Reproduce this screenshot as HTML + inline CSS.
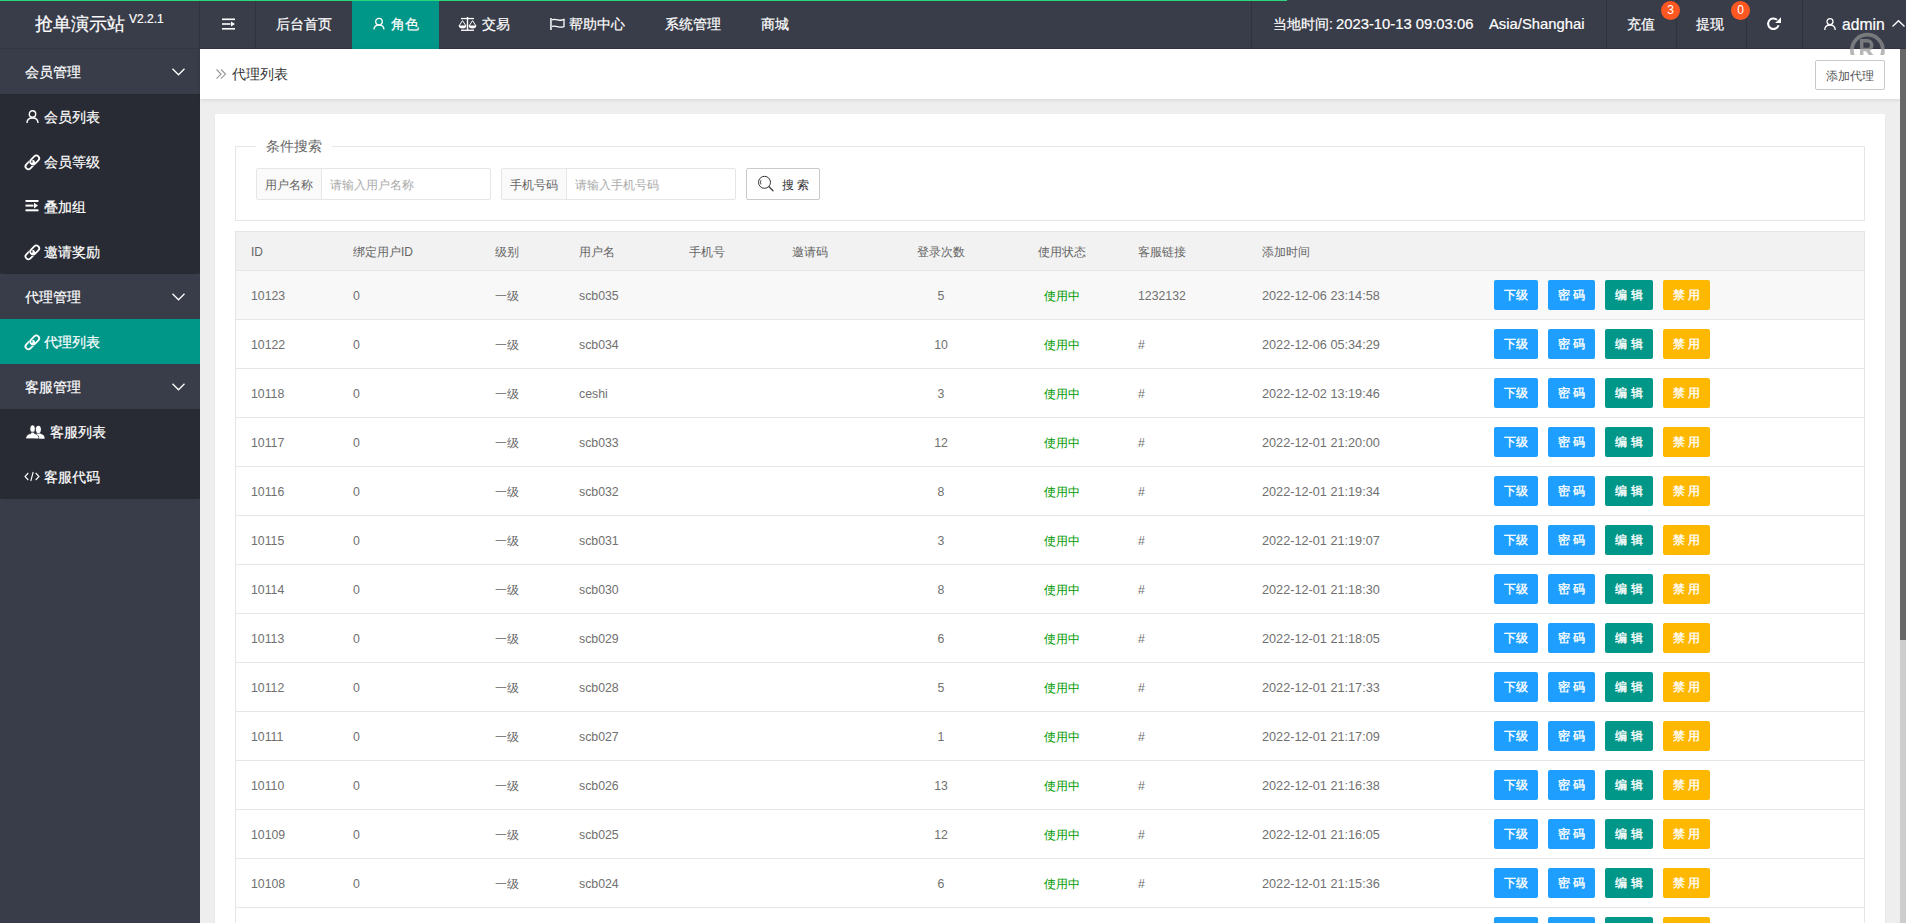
<!DOCTYPE html>
<html><head><meta charset="utf-8">
<style>
*{margin:0;padding:0;box-sizing:border-box}
html,body{width:1906px;height:923px;overflow:hidden;background:#eeeeee;font-family:"Liberation Sans",sans-serif;color:#666}
#hdr{position:absolute;left:0;top:0;width:1906px;height:49px;background:#393d49;border-bottom:1px solid #33363f}
#prog{position:absolute;left:0;top:0;width:1287px;height:1px;background:#2ad77b;z-index:5}
.t{position:absolute;white-space:nowrap;line-height:1}
.h14{font-size:14px;color:#fff}
.sep{position:absolute;top:0;width:1px;height:48px;background:#30333d}
svg{position:absolute;overflow:visible}
#side{position:absolute;left:0;top:49px;width:200px;height:874px;background:#393d49}
.pi{position:absolute;left:0;width:200px;height:45px;background:#393d49;color:#fff;font-size:14px}
.ci{position:absolute;left:0;width:200px;height:45px;color:#fff;font-size:14px}
.grp{position:absolute;left:0;width:200px;background:#282b33;border-radius:0 0 2px 2px}
#crumb{position:absolute;left:200px;top:49px;width:1700px;height:50px;background:#fff;box-shadow:0 1px 4px rgba(0,0,0,.1)}
#card{position:absolute;left:215px;top:114px;width:1670px;height:820px;background:#fff;box-shadow:0 1px 2px 0 rgba(0,0,0,.05)}
#fs{position:absolute;left:235px;top:146px;width:1630px;height:75px;border:1px solid #e6e6e6}
#legend{position:absolute;left:256px;top:138px;width:76px;height:16px;background:#fff}
.ig{position:absolute;top:168px;height:32px;border:1px solid #e6e6e6;border-radius:2px;background:#fff}
.lab{position:absolute;left:0;top:0;height:30px;background:#fafafa;border-right:1px solid #e6e6e6}
#sbtn{position:absolute;left:746px;top:168px;width:74px;height:32px;border:1px solid #c9c9c9;border-radius:2px;background:#fff}
#tbl{position:absolute;left:235px;top:231px;width:1630px;height:700px;border:1px solid #e6e6e6;border-bottom:none}
#th{position:absolute;left:236px;top:232px;width:1628px;height:39px;background:#f2f2f2;border-bottom:1px solid #e6e6e6;font-size:12px;color:#666}
#sb{position:absolute;left:1900px;top:49px;width:6px;height:874px;background:#cdcdcd}
#thumb{position:absolute;left:1900px;top:49px;width:6px;height:591px;background:#676767}
.btn{position:absolute;top:9px;height:30px;line-height:30px;color:#fff;font-size:12px;text-align:center;border-radius:2px}
.b1{background:#1e9fff}.b2{background:#009688}.b3{background:#ffb800}
.row{position:absolute;left:236px;width:1628px;height:49px;border-bottom:1px solid #e6e6e6;font-size:12px;color:#666}
.row .t{top:19px}
.c1{left:15px}.c2{left:117px}.c3{left:259px}.c4{left:343px}.c5{left:453px}.c6{left:556px}
.c7{left:655px;width:100px;text-align:center}.c8{left:776px;width:100px;text-align:center}
.c9{left:902px}.c10{left:1026px}
.lat{font-size:12.3px;color:#707070}.dt{font-size:12.7px;color:#707070}
.green{color:#009900}
#hdr .t,#side .t{-webkit-text-stroke:0.2px currentColor}
.btn{-webkit-text-stroke:0.35px currentColor}

</style></head>
<body>
<div id="hdr">
 <div class="sep" style="left:199px"></div>
 <div class="sep" style="left:255px"></div>
 <div class="sep" style="left:1251px"></div>
 <div class="sep" style="left:1606px"></div>
 <div class="sep" style="left:1676px"></div>
 <div class="sep" style="left:1746px"></div>
 <div class="sep" style="left:1802px"></div>
 <span class="t" style="left:35px;top:15px;font-size:18px;color:#fff">抢单演示站</span>
 <span class="t" style="left:129px;top:13px;font-size:12px;color:#fff">V2.2.1</span>
 <svg style="left:222px;top:18px" width="14" height="13" viewBox="0 0 14 13"><rect x="0" y="0.5" width="13" height="1.6" fill="#fff"/><rect x="0" y="5.2" width="8.5" height="1.6" fill="#fff"/><path d="M9 3.6 L13 6 L9 8.4Z" fill="#fff"/><rect x="0" y="10" width="13" height="1.6" fill="#fff"/></svg>
 <span class="t h14" style="left:276px;top:17px">后台首页</span>
 <div style="position:absolute;left:352px;top:0;width:87px;height:49px;background:#009688"></div>
 <svg style="left:373px;top:17px" width="13" height="13" viewBox="0 0 13 13"><circle cx="6" cy="4.6" r="3.3" fill="none" stroke="#fff" stroke-width="1.3"/><path d="M1 12.6 C1 9.6 3 8.1 6 8.1 C9 8.1 11 9.6 11 12.6" fill="none" stroke="#fff" stroke-width="1.3"/></svg>
 <span class="t h14" style="left:391px;top:17px">角色</span>
 <svg style="left:458px;top:17px" width="19" height="14" viewBox="0 0 19 14"><rect x="3" y="0.9" width="13" height="1.3" fill="#fff"/><rect x="8.8" y="0" width="1.4" height="13" fill="#fff"/><rect x="3" y="12.6" width="13" height="1.3" fill="#fff"/><path d="M4.5 3.6 L1 9 M4.5 3.6 L8 9 M14.5 3.6 L11 9 M14.5 3.6 L18 9" stroke="#fff" stroke-width="1" fill="none"/><path d="M0.7 8.6 H8.3 A3.8 3 0 0 1 0.7 8.6Z M10.7 8.6 H18.3 A3.8 3 0 0 1 10.7 8.6Z" fill="#fff"/></svg>
 <span class="t h14" style="left:482px;top:17px">交易</span>
 <svg style="left:550px;top:17px" width="16" height="14" viewBox="0 0 16 14"><rect x="0.2" y="1" width="1.5" height="12" fill="#fff"/><path d="M2 2.8 C4.5 1.6 6.5 2.6 9 3.2 C11 3.6 12.3 2.6 14 2.3 V9.6 C12.3 10 11 10.6 9 10 C6.5 9.3 4.5 8.6 2 9.4" fill="none" stroke="#fff" stroke-width="1.3"/></svg>
 <span class="t h14" style="left:569px;top:17px">帮助中心</span>
 <span class="t h14" style="left:665px;top:17px">系统管理</span>
 <span class="t h14" style="left:761px;top:17px">商城</span>
 <span class="t h14" style="left:1273px;top:17px">当地时间:</span><span class="t" style="left:1336px;top:17px;font-size:14.8px;color:#fff">2023-10-13 09:03:06</span>
 <span class="t" style="left:1489px;top:17px;font-size:14.8px;color:#fff">Asia/Shanghai</span>
 <span class="t h14" style="left:1627px;top:17px">充值</span>
 <span class="t h14" style="left:1696px;top:17px">提现</span>
 <div style="position:absolute;left:1661px;top:1px;width:19px;height:19px;border-radius:50%;background:#ff5722;color:#fff;font-size:12px;line-height:19px;text-align:center">3</div>
 <div style="position:absolute;left:1731px;top:1px;width:19px;height:19px;border-radius:50%;background:#ff5722;color:#fff;font-size:12px;line-height:19px;text-align:center">0</div>
 <svg style="left:1767px;top:17px" width="14" height="14" viewBox="0 0 14 14"><path d="M11.5 8.2 A5.3 5.3 0 1 1 10 2.8" fill="none" stroke="#fff" stroke-width="2"/><path d="M8.2 6 L14 6 L14 0.2Z" fill="#fff"/></svg>
 <svg style="left:1824px;top:18px" width="12" height="12" viewBox="0 0 12 12"><circle cx="6" cy="3.6" r="3" fill="none" stroke="#fff" stroke-width="1.3"/><path d="M0.8 12 C0.8 8.6 2.8 7 6 7 C9.2 7 11.2 8.6 11.2 12" fill="none" stroke="#fff" stroke-width="1.3"/></svg>
 <span class="t" style="left:1842px;top:17px;font-size:15.7px;color:#fff">admin</span>
 <svg style="left:1892px;top:20px" width="13" height="7" viewBox="0 0 13 7"><path d="M0.5 6.5 L6.5 0.7 L12.5 6.5" fill="none" stroke="#fff" stroke-width="1.3"/></svg>
</div>
<div id="prog"></div>
<div id="side">
 <div class="pi" style="top:0"><span class="t" style="left:25px;top:16px">会员管理</span><svg style="left:172px;top:19px" width="13" height="8" viewBox="0 0 13 8"><path d="M0.5 0.8 L6.5 6.8 L12.5 0.8" fill="none" stroke="#fff" stroke-width="1.3"/></svg></div>
 <div class="grp" style="top:45px;height:180px"></div>
 <div class="ci" style="top:45px"><svg style="left:26px;top:16px" width="13" height="13" viewBox="0 0 13 13"><circle cx="6.5" cy="4" r="3.2" fill="none" stroke="#fff" stroke-width="1.4"/><path d="M1 13 C1 9.5 3 8 6.5 8 C10 8 12 9.5 12 13" fill="none" stroke="#fff" stroke-width="1.4"/></svg><span class="t" style="left:44px;top:16px">会员列表</span></div>
 <div class="ci" style="top:90px"><svg style="left:23px;top:14px" width="19.2" height="19.2" viewBox="0 0 16 16"><g transform="rotate(-45 7.8 7.8)"><rect x="0.75" y="5.4" width="8.5" height="4.8" rx="2.4" fill="none" stroke="#fff" stroke-width="1.5"/><rect x="6.35" y="5.4" width="8.5" height="4.8" rx="2.4" fill="none" stroke="#282b33" stroke-width="2.6"/><rect x="6.35" y="5.4" width="8.5" height="4.8" rx="2.4" fill="none" stroke="#fff" stroke-width="1.5"/><path d="M6.4 8.6 A2.4 2.4 0 0 1 9.25 10.2" fill="none" stroke="#fff" stroke-width="1.5"/></g></svg><span class="t" style="left:44px;top:16px">会员等级</span></div>
 <div class="ci" style="top:135px"><svg style="left:25px;top:16px" width="14" height="13" viewBox="0 0 14 13"><rect x="0.5" y="0" width="13" height="2" fill="#fff"/><rect x="0.5" y="4.6" width="8" height="2" fill="#fff"/><path d="M9 2.8 L13 5.6 L9 8.4Z" fill="#fff"/><rect x="0.5" y="9.3" width="13" height="2" fill="#fff"/></svg><span class="t" style="left:44px;top:16px">叠加组</span></div>
 <div class="ci" style="top:180px"><svg style="left:23px;top:14px" width="19.2" height="19.2" viewBox="0 0 16 16"><g transform="rotate(-45 7.8 7.8)"><rect x="0.75" y="5.4" width="8.5" height="4.8" rx="2.4" fill="none" stroke="#fff" stroke-width="1.5"/><rect x="6.35" y="5.4" width="8.5" height="4.8" rx="2.4" fill="none" stroke="#282b33" stroke-width="2.6"/><rect x="6.35" y="5.4" width="8.5" height="4.8" rx="2.4" fill="none" stroke="#fff" stroke-width="1.5"/><path d="M6.4 8.6 A2.4 2.4 0 0 1 9.25 10.2" fill="none" stroke="#fff" stroke-width="1.5"/></g></svg><span class="t" style="left:44px;top:16px">邀请奖励</span></div>
 <div class="pi" style="top:225px"><span class="t" style="left:25px;top:16px">代理管理</span><svg style="left:172px;top:19px" width="13" height="8" viewBox="0 0 13 8"><path d="M0.5 0.8 L6.5 6.8 L12.5 0.8" fill="none" stroke="#fff" stroke-width="1.3"/></svg></div>
 <div class="ci" style="top:270px;background:#009688"><svg style="left:23px;top:14px" width="19.2" height="19.2" viewBox="0 0 16 16"><g transform="rotate(-45 7.8 7.8)"><rect x="0.75" y="5.4" width="8.5" height="4.8" rx="2.4" fill="none" stroke="#fff" stroke-width="1.5"/><rect x="6.35" y="5.4" width="8.5" height="4.8" rx="2.4" fill="none" stroke="#009688" stroke-width="2.6"/><rect x="6.35" y="5.4" width="8.5" height="4.8" rx="2.4" fill="none" stroke="#fff" stroke-width="1.5"/><path d="M6.4 8.6 A2.4 2.4 0 0 1 9.25 10.2" fill="none" stroke="#fff" stroke-width="1.5"/></g></svg><span class="t" style="left:44px;top:16px">代理列表</span></div>
 <div class="pi" style="top:315px"><span class="t" style="left:25px;top:16px">客服管理</span><svg style="left:172px;top:19px" width="13" height="8" viewBox="0 0 13 8"><path d="M0.5 0.8 L6.5 6.8 L12.5 0.8" fill="none" stroke="#fff" stroke-width="1.3"/></svg></div>
 <div class="grp" style="top:360px;height:90px"></div>
 <div class="ci" style="top:360px"><svg style="left:26px;top:16px" width="19" height="14" viewBox="0 0 19 14"><ellipse cx="12.4" cy="4.4" rx="2.5" ry="3.7" fill="#fff"/><path d="M10.5 8.6 H14.3 C15.2 9.2 17.2 9.6 18.2 11.2 C18.6 12 18.6 13 18.6 13.8 H9 Z" fill="#fff"/><g stroke="#282b33" stroke-width="0.7"><ellipse cx="6.6" cy="3.8" rx="2.7" ry="3.9" fill="#fff"/><path d="M5 7.2 H8.2 V8.4 C9.5 8.8 11.2 9.4 12.2 10.8 C12.7 11.6 12.8 12.8 12.8 13.8 H-0.2 C-0.2 12.8 0 11.6 0.6 10.8 C1.6 9.4 3.4 8.8 5 8.4 Z" fill="#fff"/></g></svg><span class="t" style="left:50px;top:16px">客服列表</span></div>
 <div class="ci" style="top:405px"><svg style="left:24px;top:17px" width="16" height="10" viewBox="0 0 16 10"><path d="M4.3 2 L1 5.5 L4.3 9 M11.7 2 L15 5.5 L11.7 9 M9.2 1 L6.8 10" fill="none" stroke="#fff" stroke-width="1.1"/></svg><span class="t" style="left:44px;top:16px">客服代码</span></div>
</div>
<div id="crumb">
 <svg style="left:16px;top:20px" width="11" height="11" viewBox="0 0 11 11"><path d="M0.5 0.5 L5 5.1 L0.5 9.7 M5 0.5 L9.5 5.1 L5 9.7" fill="none" stroke="#999" stroke-width="1.2"/></svg>
 <span class="t" style="left:32px;top:18px;font-size:14px;color:#333">代理列表</span>
 <div style="position:absolute;left:1615px;top:11px;width:70px;height:30px;border:1px solid #c9c9c9;border-radius:2px;background:#fff"><span class="t" style="left:10px;top:9px;font-size:12px;color:#555">添加代理</span></div>
</div>
<div id="card"></div>
<div id="fs"></div>
<div id="legend"><span class="t" style="left:10px;top:1px;font-size:14px;color:#666">条件搜索</span></div>
<div class="ig" style="left:256px;width:235px"><div class="lab" style="width:65px"><span class="t" style="left:8px;top:10px;font-size:12px;color:#666">用户名称</span></div><span class="t" style="left:73px;top:10px;font-size:12px;color:#aaa">请输入用户名称</span></div>
<div class="ig" style="left:501px;width:235px"><div class="lab" style="width:65px"><span class="t" style="left:8px;top:10px;font-size:12px;color:#666">手机号码</span></div><span class="t" style="left:73px;top:10px;font-size:12px;color:#aaa">请输入手机号码</span></div>
<div id="sbtn"><svg style="left:11px;top:7px" width="17" height="17" viewBox="0 0 17 17"><circle cx="6.5" cy="6.3" r="6" fill="none" stroke="#333" stroke-width="1"/><path d="M3 4.2 A4 4 0 0 0 3 8.4" fill="none" stroke="#333" stroke-width="0.9"/><path d="M11 10.8 L15 14.8" stroke="#444" stroke-width="1.4" stroke-linecap="round"/></svg><span class="t" style="left:35px;top:10px;font-size:12px;color:#333">搜&nbsp;索</span></div>
<div id="tbl"></div>
<div id="th">
 <span class="t" style="left:15px;top:14px">ID</span>
 <span class="t" style="left:117px;top:14px">绑定用户ID</span>
 <span class="t" style="left:259px;top:14px">级别</span>
 <span class="t" style="left:343px;top:14px">用户名</span>
 <span class="t" style="left:453px;top:14px">手机号</span>
 <span class="t" style="left:556px;top:14px">邀请码</span>
 <span class="t" style="left:655px;top:14px;width:100px;text-align:center">登录次数</span>
 <span class="t" style="left:776px;top:14px;width:100px;text-align:center">使用状态</span>
 <span class="t" style="left:902px;top:14px">客服链接</span>
 <span class="t" style="left:1026px;top:14px">添加时间</span>
</div>
<div class="row" style="top:271px;background:#f8f8f8"><span class="t c1 lat">10123</span><span class="t c2 lat">0</span><span class="t c3">一级</span><span class="t c4 lat">scb035</span><span class="t c7 lat">5</span><span class="t c8 green">使用中</span><span class="t c9 lat">1232132</span><span class="t c10 dt">2022-12-06 23:14:58</span><div class="btn b1" style="left:1258px;width:44px">下级</div><div class="btn b1" style="left:1312px;width:47px">密 码</div><div class="btn b2" style="left:1369px;width:48px">编 辑</div><div class="btn b3" style="left:1427px;width:47px">禁 用</div></div>
<div class="row" style="top:320px;background:#fff"><span class="t c1 lat">10122</span><span class="t c2 lat">0</span><span class="t c3">一级</span><span class="t c4 lat">scb034</span><span class="t c7 lat">10</span><span class="t c8 green">使用中</span><span class="t c9 lat">#</span><span class="t c10 dt">2022-12-06 05:34:29</span><div class="btn b1" style="left:1258px;width:44px">下级</div><div class="btn b1" style="left:1312px;width:47px">密 码</div><div class="btn b2" style="left:1369px;width:48px">编 辑</div><div class="btn b3" style="left:1427px;width:47px">禁 用</div></div>
<div class="row" style="top:369px;background:#fff"><span class="t c1 lat">10118</span><span class="t c2 lat">0</span><span class="t c3">一级</span><span class="t c4 lat">ceshi</span><span class="t c7 lat">3</span><span class="t c8 green">使用中</span><span class="t c9 lat">#</span><span class="t c10 dt">2022-12-02 13:19:46</span><div class="btn b1" style="left:1258px;width:44px">下级</div><div class="btn b1" style="left:1312px;width:47px">密 码</div><div class="btn b2" style="left:1369px;width:48px">编 辑</div><div class="btn b3" style="left:1427px;width:47px">禁 用</div></div>
<div class="row" style="top:418px;background:#fff"><span class="t c1 lat">10117</span><span class="t c2 lat">0</span><span class="t c3">一级</span><span class="t c4 lat">scb033</span><span class="t c7 lat">12</span><span class="t c8 green">使用中</span><span class="t c9 lat">#</span><span class="t c10 dt">2022-12-01 21:20:00</span><div class="btn b1" style="left:1258px;width:44px">下级</div><div class="btn b1" style="left:1312px;width:47px">密 码</div><div class="btn b2" style="left:1369px;width:48px">编 辑</div><div class="btn b3" style="left:1427px;width:47px">禁 用</div></div>
<div class="row" style="top:467px;background:#fff"><span class="t c1 lat">10116</span><span class="t c2 lat">0</span><span class="t c3">一级</span><span class="t c4 lat">scb032</span><span class="t c7 lat">8</span><span class="t c8 green">使用中</span><span class="t c9 lat">#</span><span class="t c10 dt">2022-12-01 21:19:34</span><div class="btn b1" style="left:1258px;width:44px">下级</div><div class="btn b1" style="left:1312px;width:47px">密 码</div><div class="btn b2" style="left:1369px;width:48px">编 辑</div><div class="btn b3" style="left:1427px;width:47px">禁 用</div></div>
<div class="row" style="top:516px;background:#fff"><span class="t c1 lat">10115</span><span class="t c2 lat">0</span><span class="t c3">一级</span><span class="t c4 lat">scb031</span><span class="t c7 lat">3</span><span class="t c8 green">使用中</span><span class="t c9 lat">#</span><span class="t c10 dt">2022-12-01 21:19:07</span><div class="btn b1" style="left:1258px;width:44px">下级</div><div class="btn b1" style="left:1312px;width:47px">密 码</div><div class="btn b2" style="left:1369px;width:48px">编 辑</div><div class="btn b3" style="left:1427px;width:47px">禁 用</div></div>
<div class="row" style="top:565px;background:#fff"><span class="t c1 lat">10114</span><span class="t c2 lat">0</span><span class="t c3">一级</span><span class="t c4 lat">scb030</span><span class="t c7 lat">8</span><span class="t c8 green">使用中</span><span class="t c9 lat">#</span><span class="t c10 dt">2022-12-01 21:18:30</span><div class="btn b1" style="left:1258px;width:44px">下级</div><div class="btn b1" style="left:1312px;width:47px">密 码</div><div class="btn b2" style="left:1369px;width:48px">编 辑</div><div class="btn b3" style="left:1427px;width:47px">禁 用</div></div>
<div class="row" style="top:614px;background:#fff"><span class="t c1 lat">10113</span><span class="t c2 lat">0</span><span class="t c3">一级</span><span class="t c4 lat">scb029</span><span class="t c7 lat">6</span><span class="t c8 green">使用中</span><span class="t c9 lat">#</span><span class="t c10 dt">2022-12-01 21:18:05</span><div class="btn b1" style="left:1258px;width:44px">下级</div><div class="btn b1" style="left:1312px;width:47px">密 码</div><div class="btn b2" style="left:1369px;width:48px">编 辑</div><div class="btn b3" style="left:1427px;width:47px">禁 用</div></div>
<div class="row" style="top:663px;background:#fff"><span class="t c1 lat">10112</span><span class="t c2 lat">0</span><span class="t c3">一级</span><span class="t c4 lat">scb028</span><span class="t c7 lat">5</span><span class="t c8 green">使用中</span><span class="t c9 lat">#</span><span class="t c10 dt">2022-12-01 21:17:33</span><div class="btn b1" style="left:1258px;width:44px">下级</div><div class="btn b1" style="left:1312px;width:47px">密 码</div><div class="btn b2" style="left:1369px;width:48px">编 辑</div><div class="btn b3" style="left:1427px;width:47px">禁 用</div></div>
<div class="row" style="top:712px;background:#fff"><span class="t c1 lat">10111</span><span class="t c2 lat">0</span><span class="t c3">一级</span><span class="t c4 lat">scb027</span><span class="t c7 lat">1</span><span class="t c8 green">使用中</span><span class="t c9 lat">#</span><span class="t c10 dt">2022-12-01 21:17:09</span><div class="btn b1" style="left:1258px;width:44px">下级</div><div class="btn b1" style="left:1312px;width:47px">密 码</div><div class="btn b2" style="left:1369px;width:48px">编 辑</div><div class="btn b3" style="left:1427px;width:47px">禁 用</div></div>
<div class="row" style="top:761px;background:#fff"><span class="t c1 lat">10110</span><span class="t c2 lat">0</span><span class="t c3">一级</span><span class="t c4 lat">scb026</span><span class="t c7 lat">13</span><span class="t c8 green">使用中</span><span class="t c9 lat">#</span><span class="t c10 dt">2022-12-01 21:16:38</span><div class="btn b1" style="left:1258px;width:44px">下级</div><div class="btn b1" style="left:1312px;width:47px">密 码</div><div class="btn b2" style="left:1369px;width:48px">编 辑</div><div class="btn b3" style="left:1427px;width:47px">禁 用</div></div>
<div class="row" style="top:810px;background:#fff"><span class="t c1 lat">10109</span><span class="t c2 lat">0</span><span class="t c3">一级</span><span class="t c4 lat">scb025</span><span class="t c7 lat">12</span><span class="t c8 green">使用中</span><span class="t c9 lat">#</span><span class="t c10 dt">2022-12-01 21:16:05</span><div class="btn b1" style="left:1258px;width:44px">下级</div><div class="btn b1" style="left:1312px;width:47px">密 码</div><div class="btn b2" style="left:1369px;width:48px">编 辑</div><div class="btn b3" style="left:1427px;width:47px">禁 用</div></div>
<div class="row" style="top:859px;background:#fff"><span class="t c1 lat">10108</span><span class="t c2 lat">0</span><span class="t c3">一级</span><span class="t c4 lat">scb024</span><span class="t c7 lat">6</span><span class="t c8 green">使用中</span><span class="t c9 lat">#</span><span class="t c10 dt">2022-12-01 21:15:36</span><div class="btn b1" style="left:1258px;width:44px">下级</div><div class="btn b1" style="left:1312px;width:47px">密 码</div><div class="btn b2" style="left:1369px;width:48px">编 辑</div><div class="btn b3" style="left:1427px;width:47px">禁 用</div></div>
<div class="row" style="top:908px;background:#fff"><div class="btn b1" style="left:1258px;width:44px">下级</div><div class="btn b1" style="left:1312px;width:47px">密 码</div><div class="btn b2" style="left:1369px;width:48px">编 辑</div><div class="btn b3" style="left:1427px;width:47px">禁 用</div></div>
<div id="sb"></div>
<div id="thumb"></div>
<div style="position:absolute;left:1848px;top:30px;width:40px;height:25px;overflow:hidden"><svg style="left:0;top:0" width="40" height="40" viewBox="0 0 40 40"><circle cx="19.4" cy="20.2" r="15.5" fill="none" stroke="rgba(150,150,150,.68)" stroke-width="3.8"/><path d="M13.7 27 V10.8 H19.3 A4.4 4.4 0 0 1 19.3 19.6 H13.7 M18.8 19.6 L24.8 27" fill="none" stroke="rgba(150,150,150,.68)" stroke-width="3.5"/></svg></div>

</body></html>
